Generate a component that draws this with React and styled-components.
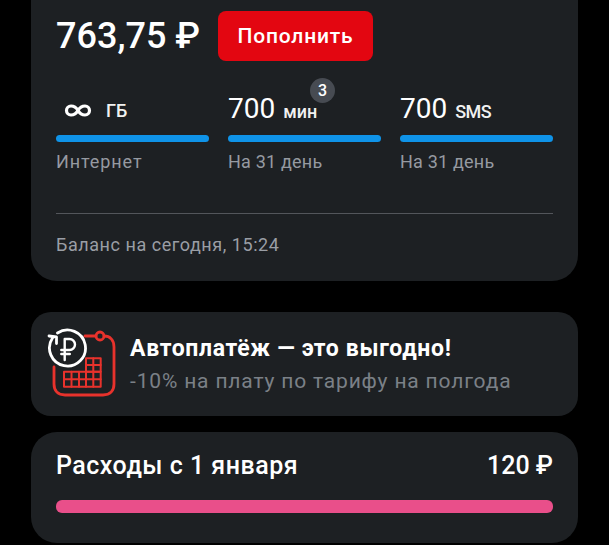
import React from "react";
import styled, { createGlobalStyle } from "styled-components";

const Global = createGlobalStyle`
  html, body {
    margin: 0;
    background: #000;
    font-family: Roboto, "Noto Sans", sans-serif;
    overflow: hidden;
  }
`;

const Page = styled.div`
  width: 609px;
  height: 545px;
  padding: 0 31px;
  box-sizing: border-box;
  display: flex;
  flex-direction: column;
  background: #000;
`;

const Card = styled.section`
  background: #1d2023;
  border-radius: ${({ $radius }) => $radius}px;
  margin-top: ${({ $top }) => $top}px;
  height: ${({ $height }) => $height}px;
  box-sizing: border-box;
`;

const BalanceCard = styled(Card)`
  border-radius: 0 0 26px 26px;
  padding: 11px 25px 0;
  display: flex;
  flex-direction: column;
`;

const TopRow = styled.div`
  display: flex;
  align-items: center;
  gap: 20px;
`;

const Amount = styled.div`
  width: 142px;
  color: #fff;
  font-size: 36px;
  font-weight: 500;
  line-height: 50px;
  white-space: nowrap;
`;

const TopUp = styled.button`
  width: 155px;
  height: 50px;
  border: 0;
  border-radius: 8px;
  background: #e30611;
  color: #fff;
  font: 500 21px Roboto, sans-serif;
  letter-spacing: 0.8px;
`;

const Tariffs = styled.div`
  display: grid;
  grid-template-columns: repeat(3, 153px);
  gap: 19px;
  margin-top: 32px;
`;

const Tariff = styled.div`
  position: relative;
  display: flex;
  flex-direction: column;
`;

const Value = styled.div`
  height: 32px;
  display: flex;
  align-items: baseline;
  gap: 8px;
  color: #fff;
  font-size: 28px;
  line-height: 32px;
`;

const Unit = styled.span`
  font-size: 18px;
  font-weight: 500;
  color: #f1f1f1;
  letter-spacing: ${({ $track = 0 }) => $track}px;
`;

const UnlimitedValue = styled(Value)`
  align-items: center;
  gap: 14px;
  padding-left: 8px;
  padding-top: 3px;
  box-sizing: border-box;
`;

const Badge = styled.span`
  position: absolute;
  left: 82px;
  top: -15px;
  width: 25px;
  height: 25px;
  border-radius: 50%;
  background: #474b52;
  color: #fff;
  font-size: 16px;
  font-weight: 500;
  display: flex;
  align-items: center;
  justify-content: center;
`;

const Bar = styled.div`
  height: 7px;
  margin-top: 10px;
  border-radius: 4px;
  background: #0f93e8;
`;

const Caption = styled.div`
  margin-top: 8px;
  color: #969aa1;
  font-size: 18px;
  line-height: 24px;
  letter-spacing: ${({ $track }) => $track}px;
`;

const Divider = styled.div`
  height: 1px;
  margin-top: 39px;
  background: #53565b;
`;

const Updated = styled.div`
  margin-top: 19px;
  color: #9a9ea5;
  font-size: 18px;
  line-height: 24px;
  letter-spacing: 0.55px;
`;

const PromoCard = styled(Card)`
  display: flex;
  align-items: center;
  gap: 13px;
  padding: 0 16px;
`;

const PromoText = styled.div`
  display: flex;
  flex-direction: column;
  gap: 6px;
  padding-top: 1px;
`;

const PromoTitle = styled.div`
  color: #fff;
  font-size: 23px;
  font-weight: 700;
  line-height: 26px;
  letter-spacing: 0.68px;
  white-space: nowrap;
`;

const PromoSub = styled.div`
  color: #7b8087;
  font-size: 21px;
  line-height: 26px;
  letter-spacing: 0.83px;
  white-space: nowrap;
`;

const SpendCard = styled(Card)`
  padding: 18px 25px 0;
`;

const SpendRow = styled.div`
  display: flex;
  justify-content: space-between;
  align-items: center;
  color: #fff;
  font-size: 25px;
  font-weight: 500;
  line-height: 32px;
`;

const SpendTitle = styled.span`
  letter-spacing: 0.5px;
`;

const SpendBar = styled.div`
  height: 13px;
  margin-top: 18px;
  border-radius: 6px;
  background: #e94f8a;
`;

const UnlimitedIcon = () => (
  <svg width="28" height="13" viewBox="0 0 28 13" fill="none">
    <path
      d="M14 6.5C12 3 10 2 7 2a4.5 4.5 0 0 0 0 9c3 0 5-1 7-4.5C16 3 18 2 21 2a4.5 4.5 0 0 1 0 9c-3 0-5-1-7-4.5Z"
      stroke="#fff"
      strokeWidth="3.2"
    />
  </svg>
);

const AutopayIcon = () => (
  <svg width="70" height="72" viewBox="0 0 70 72" fill="none">
    <g stroke="#e8322c" strokeWidth="2" strokeLinecap="round" strokeLinejoin="round">
      <path d="M38 8h11M57 8c6 0 10 4 10 11v37c0 7-4 11-11 11H18c-7 0-11-4-11-11V39" strokeWidth="2.8" />
      <circle cx="53" cy="8" r="4" strokeWidth="2.8" />
      <path d="M17 43.7h36.7v15H17z" />
      <path d="M24.5 43.7v15M32 43.7v15M39 43.7v15M46.3 43.7v15M17 51.2h36.7" />
      <path d="M39 30.3h14.7v13.4H39z" />
      <path d="M46.3 30.3v13.4M39 37h14.7" />
    </g>
    <path d="M10.5 5A18 18 0 1 1 5.5 10" stroke="#fff" strokeWidth="2.8" strokeLinecap="round" />
    <path d="M2 8l7.5 1v6.5" stroke="#fff" strokeWidth="2.8" strokeLinecap="round" strokeLinejoin="round" />
    <path
      d="M17.7 32V11H22.5a5.5 5.5 0 0 1 0 11h-8.2M14.3 26h8.5"
      stroke="#fff"
      strokeWidth="2.4"
      strokeLinecap="round"
      strokeLinejoin="round"
    />
  </svg>
);

export default function App() {
  return (
    <Page>
      <Global />
      <BalanceCard $height={281}>
        <TopRow>
          <Amount>763,75 ₽</Amount>
          <TopUp>Пополнить</TopUp>
        </TopRow>
        <Tariffs>
          <Tariff>
            <UnlimitedValue>
              <UnlimitedIcon />
              <Unit>ГБ</Unit>
            </UnlimitedValue>
            <Bar />
            <Caption $track={0.9}>Интернет</Caption>
          </Tariff>
          <Tariff>
            <Value>
              700 <Unit>мин</Unit>
            </Value>
            <Badge>3</Badge>
            <Bar />
            <Caption $track={0.2}>На 31 день</Caption>
          </Tariff>
          <Tariff>
            <Value>
              700 <Unit $track={-0.6}>SMS</Unit>
            </Value>
            <Bar />
            <Caption $track={0.2}>На 31 день</Caption>
          </Tariff>
        </Tariffs>
        <Divider />
        <Updated>Баланс на сегодня, 15:24</Updated>
      </BalanceCard>
      <PromoCard $top={31} $height={104} $radius={20}>
        <AutopayIcon />
        <PromoText>
          <PromoTitle>Автоплатёж — это выгодно!</PromoTitle>
          <PromoSub>-10% на плату по тарифу на полгода</PromoSub>
        </PromoText>
      </PromoCard>
      <SpendCard $top={16} $height={111} $radius={26}>
        <SpendRow>
          <SpendTitle>Расходы с 1 января</SpendTitle>
          <span>120 ₽</span>
        </SpendRow>
        <SpendBar />
      </SpendCard>
    </Page>
  );
}
